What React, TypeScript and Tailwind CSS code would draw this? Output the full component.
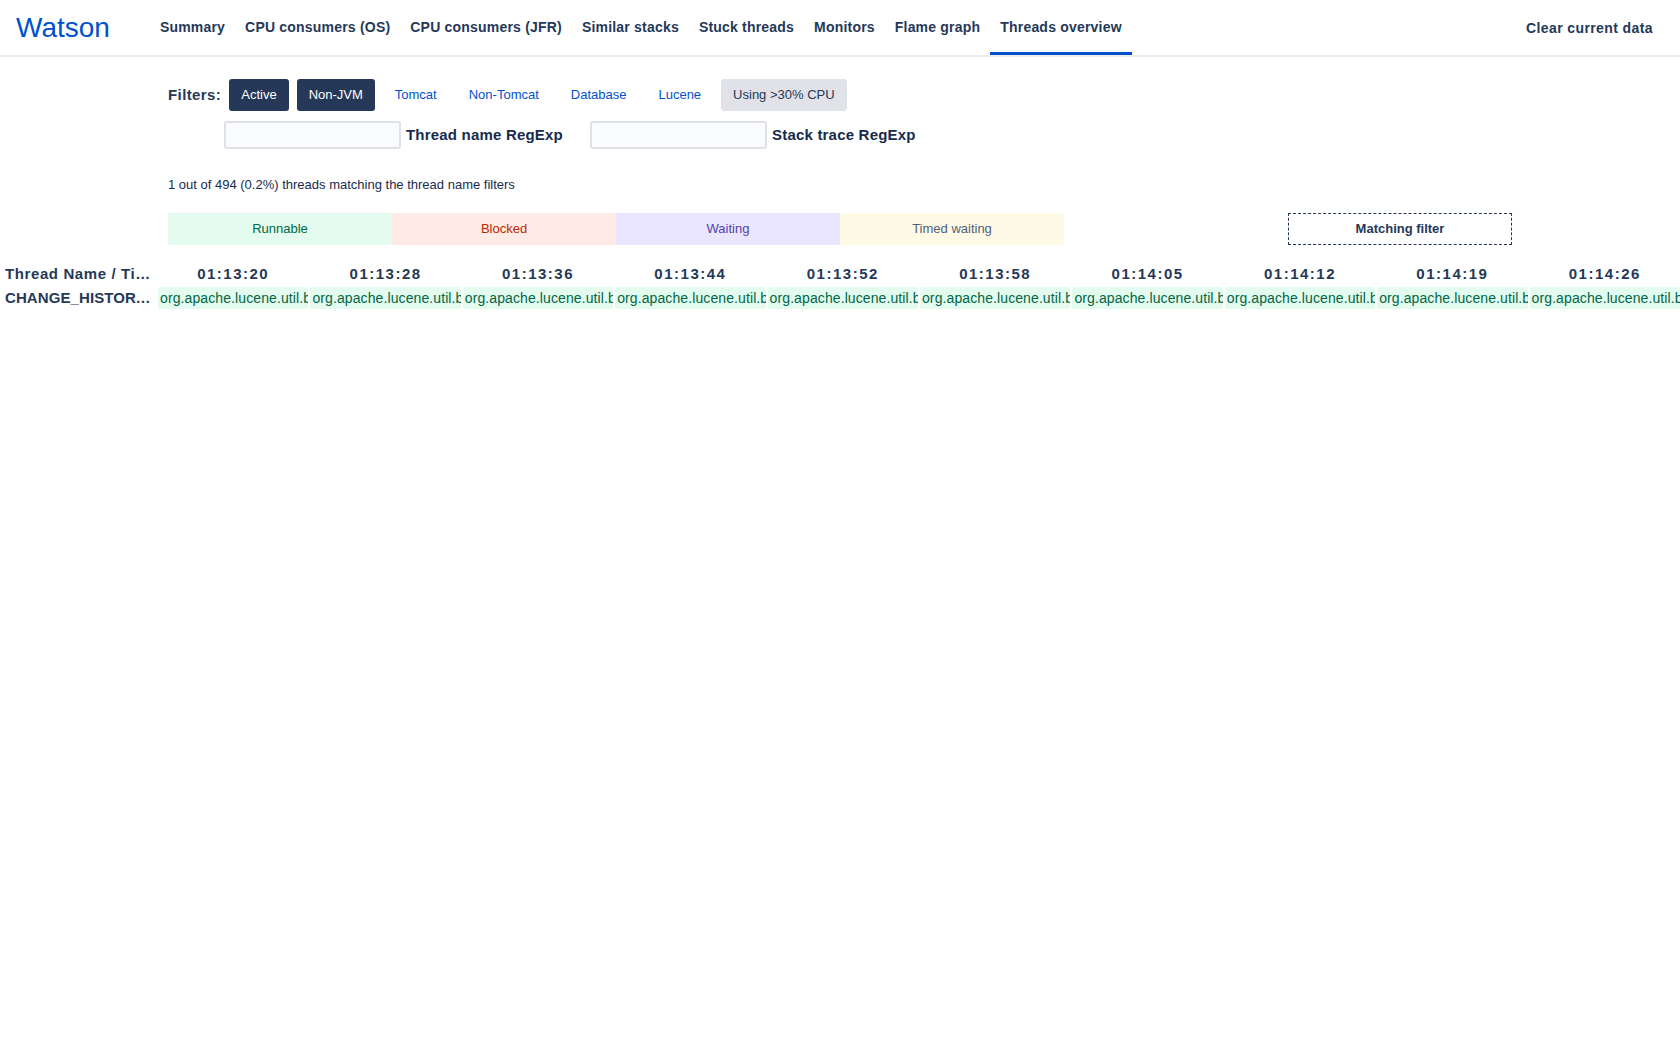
import React, { useState } from "react";

const navItems = [
  "Summary",
  "CPU consumers (OS)",
  "CPU consumers (JFR)",
  "Similar stacks",
  "Stuck threads",
  "Monitors",
  "Flame graph",
  "Threads overview",
];

const filters = [
  { label: "Active", kind: "on" },
  { label: "Non-JVM", kind: "on" },
  { label: "Tomcat", kind: "link" },
  { label: "Non-Tomcat", kind: "link" },
  { label: "Database", kind: "link" },
  { label: "Lucene", kind: "link" },
  { label: "Using >30% CPU", kind: "muted" },
];

const times = [
  "01:13:20",
  "01:13:28",
  "01:13:36",
  "01:13:44",
  "01:13:52",
  "01:13:58",
  "01:14:05",
  "01:14:12",
  "01:14:19",
  "01:14:26",
];

const App: React.FC = () => {
  const [active] = useState("Threads overview");

  return (
    <div className="min-h-screen bg-white font-['Liberation_Sans',Arial,sans-serif] text-[#172b4d]">
      {/* Top bar */}
      <header className="flex h-[57px] items-stretch border-b-2 border-[#ebecf0] pl-4 pr-[17px]">
        <div className="flex items-center text-[28px] leading-none text-[#0052cc]">Watson</div>
        <nav className="ml-10 flex items-stretch">
          {navItems.map((item) => (
            <a
              key={item}
              className={
                "flex items-center border-b-[3px] px-[10px] pt-[3px] text-[14px] font-bold tracking-[0.2px] text-[#253858] " +
                (item === active ? "border-[#0052cc]" : "border-transparent")
              }
            >
              {item}
            </a>
          ))}
        </nav>
        <div className="ml-auto flex items-center px-[10px] pt-[1px] text-[14px] font-bold tracking-[0.4px] text-[#253858]">
          Clear current data
        </div>
      </header>

      {/* Filters */}
      <div className="px-[168px] pt-[22px]">
        <div className="flex h-8 items-center gap-2">
          <span className="text-[15px] font-bold tracking-[0.4px] text-[#253858]">Filters:</span>
          {filters.map((f) => (
            <button
              key={f.label}
              className={
                "h-8 rounded-[3px] px-3 text-[13px] " +
                (f.kind === "on"
                  ? "bg-[#253858] text-white"
                  : f.kind === "muted"
                  ? "bg-[#e1e2e7] text-[#253858]"
                  : "text-[#0052cc]")
              }
            >
              {f.label}
            </button>
          ))}
        </div>

        <div className="mt-[10px] flex h-7 items-center pl-[56px]">
          <input className="h-7 w-[177px] rounded-[3px] border-2 border-[#dfe1e6] bg-[#fafbfc]" />
          <span className="ml-[5px] text-[15px] font-bold tracking-[0.2px] text-[#172b4d]">Thread name RegExp</span>
          <input className="ml-[27px] h-7 w-[177px] rounded-[3px] border-2 border-[#dfe1e6] bg-[#fafbfc]" />
          <span className="ml-[5px] text-[15px] font-bold tracking-[0.2px] text-[#172b4d]">Stack trace RegExp</span>
        </div>

        <p className="mt-[26px] text-[13px] leading-5 text-[#172b4d]">
          1 out of 494 (0.2%) threads matching the thread name filters
        </p>

        {/* Legend */}
        <div className="mt-[18px] grid h-8 grid-cols-6 text-[13px]">
          <div className="flex items-center justify-center bg-[#e3fcef] text-[#006644]">Runnable</div>
          <div className="flex items-center justify-center bg-[#ffebe6] text-[#bf2600]">Blocked</div>
          <div className="flex items-center justify-center bg-[#eae6ff] text-[#5243aa]">Waiting</div>
          <div className="flex items-center justify-center bg-[#fffae6] text-[#505f79]">Timed waiting</div>
          <div />
          <div className="flex items-center justify-center border border-dashed border-[#253858] font-bold text-[#253858]">
            Matching filter
          </div>
        </div>
      </div>

      {/* Timeline table */}
      <div className="mt-[17px] grid grid-cols-[156px_repeat(10,minmax(0,1fr))] gap-x-[2px]">
        <div className="flex h-6 min-w-0 items-center pl-[5px] pr-1">
          <span className="truncate text-[15px] font-bold tracking-[0.6px] text-[#253858]">
            Thread Name / Timestamp
          </span>
        </div>
        {times.map((t) => (
          <div
            key={t}
            className="flex h-6 items-center justify-center text-[15px] font-bold tracking-[1.5px] text-[#253858]"
          >
            {t}
          </div>
        ))}

        <div className="flex h-6 min-w-0 items-center pl-[5px] pr-1">
          <span className="truncate text-[15px] font-bold tracking-[0.1px] text-[#253858]">
            CHANGE_HISTORY_INDEXER
          </span>
        </div>
        {times.map((t) => (
          <div key={t} className="flex h-6 items-center py-[1px]">
            <div className="flex h-full w-full items-center overflow-hidden whitespace-nowrap rounded-[3px] bg-[#e3fcef] px-[2px] text-[14px] tracking-[0.1px] text-[#006644]">
              org.apache.lucene.util.bkd.BKDWriter
            </div>
          </div>
        ))}
      </div>
    </div>
  );
};

export default App;
